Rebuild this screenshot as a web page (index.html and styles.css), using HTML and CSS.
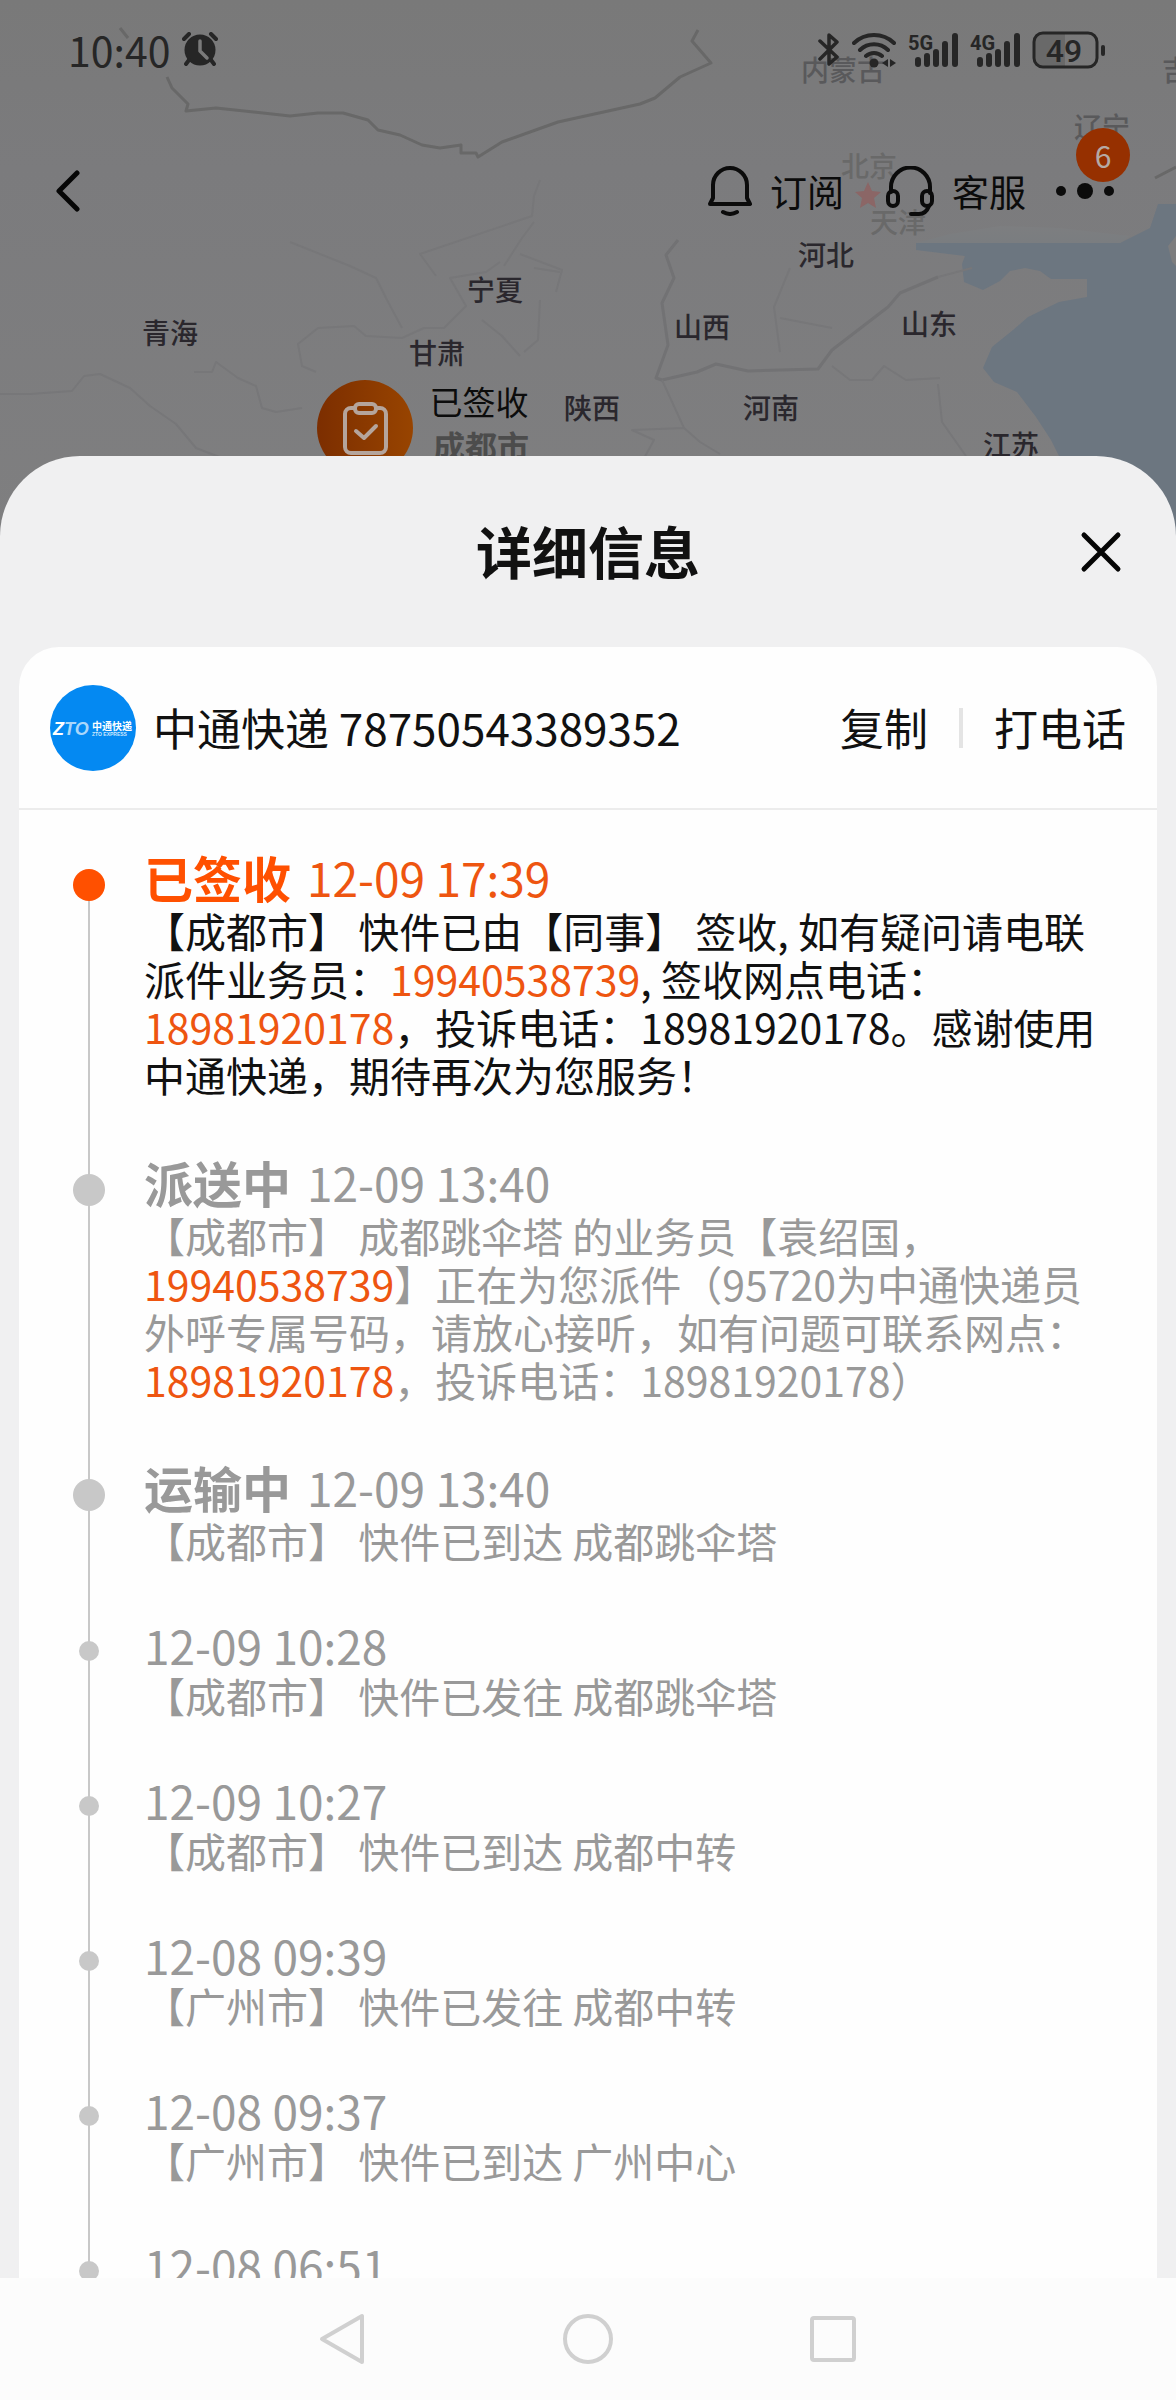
FILE: index.html
```html
<!DOCTYPE html>
<html lang="zh-CN">
<head>
    <meta charset="UTF-8">
    <meta name="viewport" content="width=device-width, initial-scale=1.0">
    <title>详细信息</title>
    <link rel="stylesheet" href="styles.css">
</head>
<body>
    <!-- Mapa de fondo -->
    <svg class="map" viewBox="0 0 1176 560" preserveAspectRatio="xMidYMin slice" aria-hidden="true">
        <defs>
            <linearGradient id="land" x1="0" y1="0" x2="0" y2="1">
                <stop offset="0" stop-color="#797979"/>
                <stop offset="0.3" stop-color="#7b7b7d"/>
                <stop offset="1" stop-color="#7f7f80"/>
            </linearGradient>
            <linearGradient id="pin" x1="0" y1="0" x2="1" y2="0">
                <stop offset="0" stop-color="#7c2e00"/>
                <stop offset="1" stop-color="#984400"/>
            </linearGradient>
            <linearGradient id="bay" x1="0" y1="0" x2="0" y2="1">
                <stop offset="0" stop-color="#7d7e80"/>
                <stop offset="1" stop-color="#7a7d80"/>
            </linearGradient>
        </defs>
        <rect width="1176" height="560" fill="url(#land)"/>
        <path class="sea" d="M916 243H1120L1150 228 1158 204H1176V560H1088L1059 456 1051 440 1036 417 1017 392 994 382 983 368 992 347 1013 330 1028 317 1059 302 1087 297V279H1051L1040 271 1025 268 1010 271 1000 281 983 290 964 282 962 264 965 256 916 250Z"/>
        <path fill="url(#bay)" d="M950 234 1000 226 1060 228 1130 236 1120 243H916Z"/>
        <path class="land" d="M1176 236 1168 246 1172 262 1176 266Z"/>

        <path class="border" d="M120 28 128 38M167 77 172 88 188 104 186 111 216 108 290 116 318 113H343L368 120 378 130 400 135 422 145 440 148 461 145V153H476L478 157 502 142 558 122 640 104 655 98 680 77 711 63 692 41 698 30M1155 178 1176 167"/>
        <path class="river" d="M678 240 666 255 674 278 662 303 668 345 656 378 662 380 697 372 716 364 748 371 818 369 832 350 888 307 900 293 938 277"/>
        <path class="river faint" d="M938 277 972 268M832 366 850 380 872 380 884 366 906 380 940 378M662 380 684 428 700 442 720 454M790 268 774 307 780 352M780 318 832 328M642 462 654 440 632 430 684 428M938 384 942 422 966 456M0 394 30 394 72 391 84 376 100 374 130 388 150 406 176 424 196 448 222 458M194 372 212 372 216 362 238 378 256 386 262 408 276 412 302 408M316 372 302 366 298 344 318 328 354 326 366 336 402 338 424 328 444 328 466 306 450 278 486 272 500 262M290 242 350 266 376 278 386 298 402 328M540 180 534 196 532 216 420 254 436 276M504 266 522 238 534 222M520 254 562 270 556 292M482 320 502 336 520 356M534 268 560 272M540 300 538 340 524 352"/>

        <g class="province">
            <text x="170" y="344">青海</text>
            <text x="495" y="301">宁夏</text>
            <text x="437" y="364">甘肃</text>
            <text x="592" y="419">陕西</text>
            <text x="771" y="419">河南</text>
            <text x="1011" y="456">江苏</text>
            <text x="929" y="335">山东</text>
            <text x="702" y="338">山西</text>
            <text x="826" y="266">河北</text>
        </g>
        <g class="province dim">
            <text x="843" y="81">内蒙古</text>
            <text x="1102" y="138">辽宁</text>
            <text x="1176" y="81">吉</text>
        </g>
        <g class="province pale">
            <text x="869" y="177">北京</text>
            <text x="898" y="233">天津</text>
        </g>
        <path fill="#8b6666" d="M868 182l4 9 9 1-7 6 2 10-8-5-8 5 2-10-7-6 9-1z"/>

        <circle cx="365" cy="428" r="48" fill="url(#pin)"/>
        <g fill="none" stroke="#b5a59c" stroke-width="4" stroke-linecap="round" stroke-linejoin="round">
            <path d="M355 408h-4a6 6 0 0 0-6 6v33a6 6 0 0 0 6 6h29a6 6 0 0 0 6-6v-33a6 6 0 0 0-6-6h-4"/>
            <rect x="355" y="404" width="21" height="9" rx="4"/>
            <path d="M356 431l8 7 12-12"/>
        </g>
        <text class="pin-state" x="479" y="415">已签收</text>
        <text class="pin-city" x="481" y="459">成都市</text>
    </svg>

    <header class="hero">
        <div class="status-bar">
            <span class="clock">10:40</span>
            <svg width="36" height="36" viewBox="0 0 36 36" aria-hidden="true">
                <circle cx="18" cy="18" r="15.500" fill="#262626"/>
                <path d="M2 7l5-5M34 7l-5-5M7 28l-3 4M29 28l3 4" fill="none" stroke="#262626" stroke-width="4" stroke-linecap="round"/>
                <path d="M18 9v10l7 7" fill="none" stroke="#7a7a7a" stroke-width="3.500" stroke-linecap="round" stroke-linejoin="round"/>
            </svg>
            <div class="status-icons">
                <svg width="22" height="36" viewBox="0 0 22 36" aria-hidden="true">
                    <path d="M2 9l17 16-8 7V3l8 7L2 27" fill="none" stroke="#262626" stroke-width="3.500" stroke-linecap="round" stroke-linejoin="round"/>
                </svg>
                <svg width="44" height="36" viewBox="0 0 44 36" aria-hidden="true">
                    <path d="M2 11a29 29 0 0 1 40 0M8 18a20 20 0 0 1 28 0M14 24a12 12 0 0 1 16 0" fill="none" stroke="#262626" stroke-width="4" stroke-linecap="round"/>
                    <circle cx="22" cy="31" r="4.500" fill="#262626"/>
                    <path d="M36 27v8l-6-4zM38 27v8l6-4z" fill="#262626"/>
                </svg>
                <svg width="50" height="36" viewBox="0 0 50 36" role="img" aria-label="5G">
                    <text class="net" x="0" y="18">5G</text>
                    <path class="bars" d="M10 28v4M19 24v8M28 20v12M37 12v20M47 4v28"/>
                </svg>
                <svg width="50" height="36" viewBox="0 0 50 36" role="img" aria-label="4G">
                    <text class="net" x="0" y="18">4G</text>
                    <path class="bars" d="M10 28v4M19 24v8M28 20v12M37 12v20M47 4v28"/>
                </svg>
                <svg width="74" height="38" viewBox="0 0 74 38" role="img" aria-label="49%">
                    <path d="M12 3h21v32H12a9 9 0 0 1-9-9V12a9 9 0 0 1 9-9z" fill="#696969"/>
                    <rect x="2" y="2" width="63" height="34" rx="9" fill="none" stroke="#262626" stroke-width="3"/>
                    <path d="M71 16v7" stroke="#262626" stroke-width="4" stroke-linecap="round"/>
                    <text class="charge" x="32" y="31">49</text>
                </svg>
            </div>
        </div>

        <nav class="toolbar">
            <button class="tool back" aria-label="返回">
                <svg width="24" height="42" viewBox="0 0 24 42"><path d="M21 3L3 21l18 18" fill="none" stroke="#060606" stroke-width="5" stroke-linecap="round" stroke-linejoin="round"/></svg>
            </button>
            <button class="tool">
                <svg width="44" height="50" viewBox="0 0 44 50" fill="none" stroke="#0b0b0b" stroke-width="4" stroke-linecap="round" stroke-linejoin="round">
                    <path d="M5 32V19a17 17 0 0 1 34 0v13l3 6H2z"/><path d="M15 46q7 4 14 0"/>
                </svg>
                订阅
            </button>
            <button class="tool">
                <svg width="48" height="50" viewBox="0 0 48 50" fill="none" stroke="#0b0b0b" stroke-width="4" stroke-linecap="round">
                    <path d="M5 26V21a19 19 0 0 1 39 0v6"/>
                    <rect x="2" y="25" width="10" height="15" rx="5"/>
                    <rect x="36" y="25" width="10" height="15" rx="5"/>
                    <path d="M43 40q-3 8-10 8h-8"/>
                </svg>
                客服
            </button>
            <button class="tool more" aria-label="更多">
                <svg width="58" height="20" viewBox="0 0 58 20" fill="#0b0b0b"><circle cx="5" cy="10" r="5"/><circle cx="29" cy="10" r="8"/><circle cx="53" cy="10" r="5"/></svg>
                <span class="badge">6</span>
            </button>
        </nav>
    </header>

    <main class="sheet">
        <div class="sheet-title">
            <h1>详细信息</h1>
            <button class="close-btn" aria-label="关闭">
                <svg width="42" height="42" viewBox="0 0 42 42"><path d="M4 4l34 34M38 4L4 38" stroke="#050505" stroke-width="5" stroke-linecap="round"/></svg>
            </button>
        </div>

        <section class="card">
            <div class="express">
                <svg class="logo" width="86" height="86" viewBox="0 0 86 86" role="img" aria-label="中通快递">
                    <circle cx="43" cy="43" r="43" fill="#0489f2"/>
                    <text class="logo-zto" x="3" y="50">Z<tspan fill="#a9d7fb">TO</tspan></text>
                    <text class="logo-name" x="42" y="45">中通快递</text>
                    <text class="logo-sub" x="42" y="51">ZTO EXPRESS</text>
                </svg>
                <span class="express-no">中通快递 78750543389352</span>
                <button class="action">复制</button>
                <span class="divider"></span>
                <button class="action">打电话</button>
            </div>

            <ol class="timeline">
                <li class="step major current">
                    <div class="step-head"><h2>已签收</h2><time>12-09 17:39</time></div>
                    <p>【成都市】 快件已由【同事】 签收, 如有疑问请电联派件业务员：<a href="tel:19940538739">19940538739</a>, 签收网点电话：<a href="tel:18981920178">18981920178</a>，投诉电话：18981920178。感谢使用中通快递，期待再次为您服务！</p>
                </li>
                <li class="step major">
                    <div class="step-head"><h2>派送中</h2><time>12-09 13:40</time></div>
                    <p>【成都市】 成都跳伞塔 的业务员【袁绍国，<a href="tel:19940538739">19940538739</a>】正在为您派件（95720为中通快递员外呼专属号码，请放心接听，如有问题可联系网点：<a href="tel:18981920178">18981920178</a>，投诉电话：18981920178）</p>
                </li>
                <li class="step major">
                    <div class="step-head"><h2>运输中</h2><time>12-09 13:40</time></div>
                    <p>【成都市】 快件已到达 成都跳伞塔</p>
                </li>
                <li class="step">
                    <div class="step-head"><time>12-09 10:28</time></div>
                    <p>【成都市】 快件已发往 成都跳伞塔</p>
                </li>
                <li class="step">
                    <div class="step-head"><time>12-09 10:27</time></div>
                    <p>【成都市】 快件已到达 成都中转</p>
                </li>
                <li class="step">
                    <div class="step-head"><time>12-08 09:39</time></div>
                    <p>【广州市】 快件已发往 成都中转</p>
                </li>
                <li class="step">
                    <div class="step-head"><time>12-08 09:37</time></div>
                    <p>【广州市】 快件已到达 广州中心</p>
                </li>
                <li class="step">
                    <div class="step-head"><time>12-08 06:51</time></div>
                </li>
            </ol>
        </section>
    </main>

    <footer class="nav-bar">
        <button aria-label="返回"><svg width="52" height="52" viewBox="0 0 52 52"><path d="M45 3v46L5 26z"/></svg></button>
        <button aria-label="主页"><svg width="52" height="52" viewBox="0 0 52 52"><circle cx="26" cy="26" r="23"/></svg></button>
        <button aria-label="最近任务"><svg width="52" height="52" viewBox="0 0 52 52"><rect x="5" y="5" width="42" height="42" rx="2"/></svg></button>
    </footer>
</body>
</html>
```

FILE: styles.css
```css
* {
    box-sizing: border-box;
}
body {
    margin: 0; height: 100vh; display: flex; flex-direction: column;
    position: relative; overflow: hidden; background-color: #7c7c7e; color: #111;
    font-family: 'Noto Sans CJK SC', sans-serif;
}
button {
    padding: 0; border: none; background: none; color: inherit;
    font-family: inherit; cursor: pointer;
}
h1, h2, p, ol {
    margin: 0; padding: 0;
}
svg {
    display: block; flex: none;
}

/* Mapa */
.map {
    position: absolute; top: 0; left: 0; width: 100%; height: 560px; z-index: -1;
}
.sea { fill: #6c7680; }
.land { fill: #7d7d7e; }
.border { fill: none; stroke: #686868; stroke-width: 3; stroke-linejoin: round; }
.river { fill: none; stroke: #727274; stroke-width: 3; stroke-linejoin: round; }
.faint { stroke: #777779; stroke-width: 2; }
.province text {
    font-size: 28px; font-weight: 500; text-anchor: middle; fill: #2a272d;
}
.province.dim text { fill: #59595b; }
.province.pale text { fill: #696969; }
.pin-state { font-size: 33px; text-anchor: middle; fill: #0c0c0c; }
.pin-city { font-size: 32px; font-weight: 700; text-anchor: middle; fill: #4c4c4c; }

/* Cabecera */
.hero {
    flex: none; min-height: 456px;
}
.status-bar {
    height: 100px; padding: 0 70px 0 68px;
    display: flex; align-items: center; gap: 12px;
}
.clock {
    font-size: 41px; line-height: 48px; padding-bottom: 2px; color: #262626;
}
.status-icons {
    margin-left: auto; display: flex; align-items: center; gap: 12px;
}
.net { font-family: Roboto, sans-serif; font-size: 20px; font-weight: 700; fill: #262626; }
.bars { stroke: #262626; stroke-width: 6; stroke-linecap: round; }
.charge {
    font-family: Roboto, sans-serif; font-size: 32px; font-weight: 500;
    text-anchor: middle; fill: #262626;
}
.toolbar {
    height: 110px; margin-top: 36px; padding: 0 62px 0 56px;
    display: flex; align-items: stretch;
}
.tool {
    display: flex; align-items: center; gap: 18px;
    font-size: 37px; color: #0b0b0b;
}
.tool + .tool { margin-left: 42px; }
.tool.back { margin-right: auto; }
.tool.more { position: relative; margin-left: 30px; }
.badge {
    position: absolute; top: -8px; right: -16px; width: 54px; height: 54px;
    border-radius: 50%; background-color: #963000; color: #b5aaa5;
    font-size: 30px; line-height: 54px; text-align: center;
}

/* Panel */
.sheet {
    flex: 1; min-height: 0; overflow: hidden; padding: 0 19px;
    display: flex; flex-direction: column;
    background-color: #f0f0f1; border-radius: 80px 80px 0 0;
}
.sheet-title {
    flex: none; height: 191px; padding: 0 35px;
    display: grid; grid-template-columns: 42px 1fr 42px; align-items: center;
}
.sheet-title h1 {
    grid-column: 2; padding-bottom: 4px; font-size: 56px; font-weight: 700;
    line-height: 72px; text-align: center;
}
.card {
    flex: 1; min-height: 0; overflow: hidden;
    background-color: #fefefe; border-radius: 40px 40px 0 0;
}
.express {
    height: 163px; padding: 0 31px; border-bottom: 2px solid #ececec;
    display: flex; align-items: center; font-size: 44px; line-height: 56px;
}
.logo-zto { font-family: 'Liberation Sans', sans-serif; font-size: 18px; font-weight: 700; font-style: italic; fill: #fff; }
.logo-name { font-size: 10px; font-weight: 700; fill: #fff; }
.logo-sub { font-family: 'Liberation Sans', sans-serif; font-size: 5px; font-weight: 700; fill: #cfe8fd; }
.express-no { margin: 0 auto 0 17px; padding-bottom: 2px; }
.action { padding-bottom: 2px; font-size: 44px; line-height: 56px; }
.divider {
    width: 4px; height: 40px; margin: 0 31px; background-color: #e4e4e4;
}

/* Línea de tiempo */
.timeline {
    list-style: none; padding: 38px 40px 0 125px;
}
.step {
    position: relative; padding-bottom: 55px; color: #999;
    font-size: 41px; line-height: 48px;
}
.step.current { color: #111; }
.step::before {
    content: ''; position: absolute; top: 32px; bottom: -32px; left: -56px;
    width: 2px; background-color: #c8c8c8;
}
.step::after {
    content: ''; position: absolute; top: 22px; left: -65px;
    width: 20px; height: 20px; border-radius: 50%; background-color: #c8c8c8;
}
.step.major::after {
    top: 21px; left: -71px; width: 32px; height: 32px;
}
.step.current::after { background-color: #ff5000; }
.step-head {
    display: flex; align-items: center; gap: 16px; height: 52px; font-size: 46px;
}
.major .step-head { height: 58px; }
.step-head h2 { font-size: 49px; font-weight: 700; line-height: 58px; }
.current .step-head { color: #ff5000; }
.step a, .current time { color: #ee5510; text-decoration: none; }

/* Botones del sistema */
.nav-bar {
    flex: none; height: 122px; padding: 0 220px; background-color: #fcfcfc;
    display: flex; justify-content: space-around; align-items: center;
}
.nav-bar svg {
    fill: none; stroke: #d0d0d0; stroke-width: 4; stroke-linejoin: round;
}
```
